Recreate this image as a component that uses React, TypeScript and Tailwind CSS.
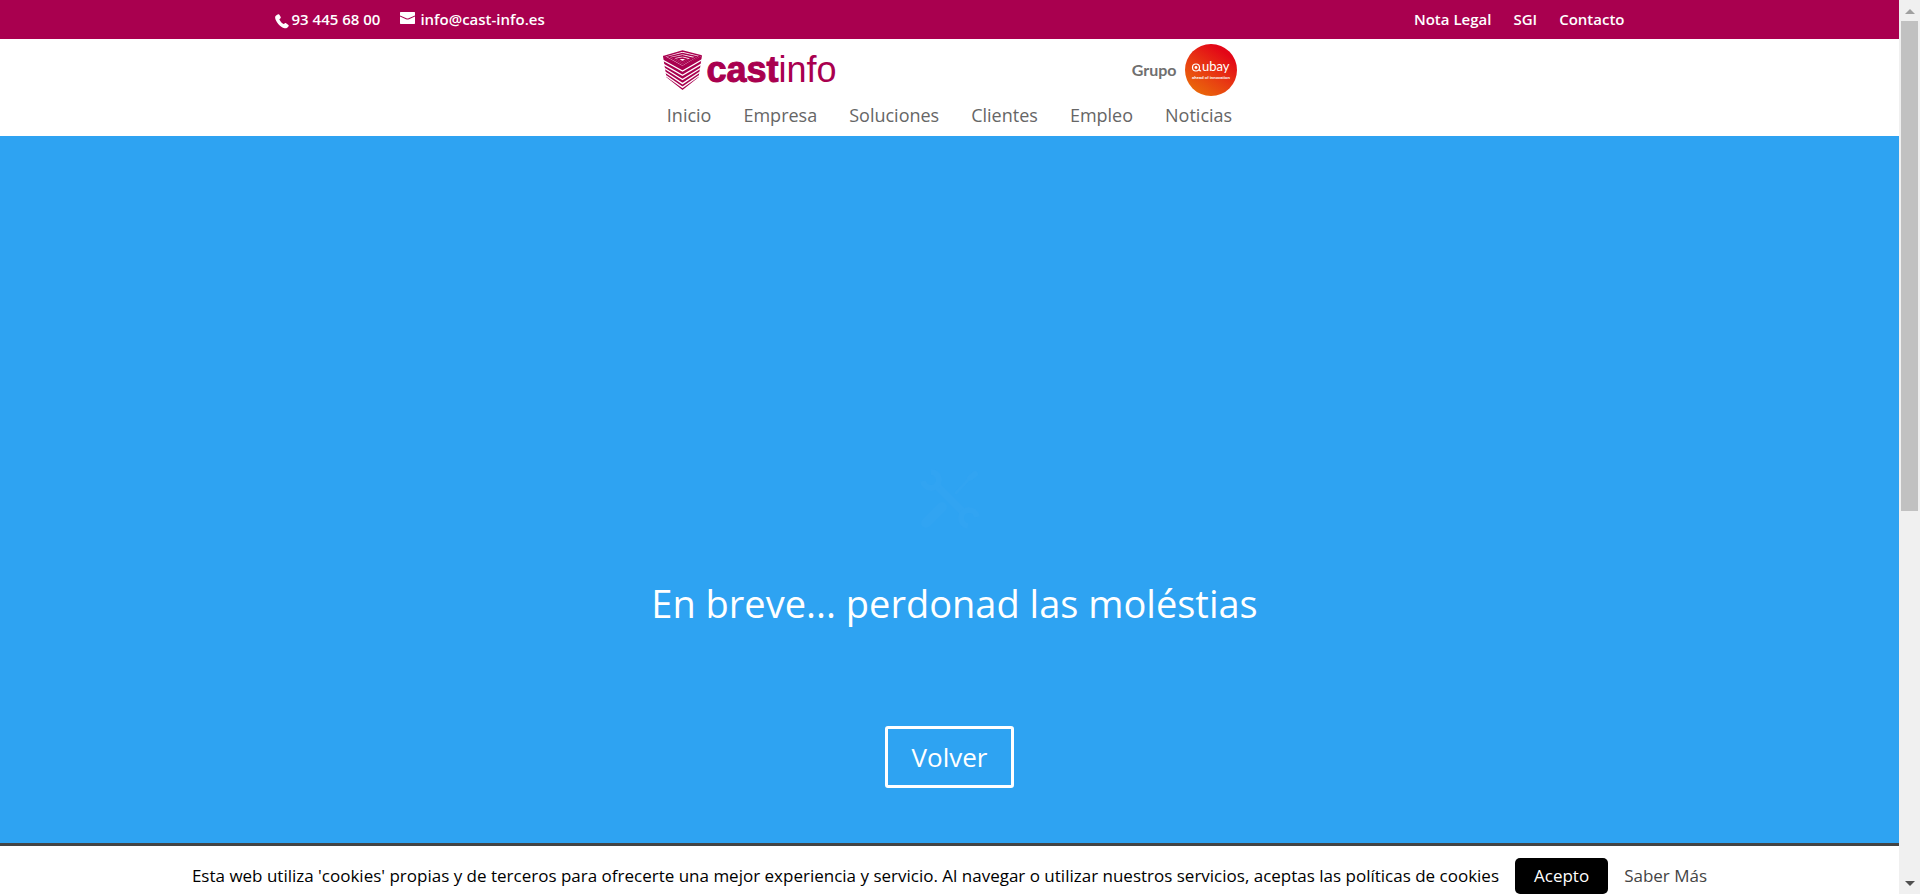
import React from "react";

const navItems = ["Inicio", "Empresa", "Soluciones", "Clientes", "Empleo", "Noticias"];
const topLinks = ["Nota Legal", "SGI", "Contacto"];

function PhoneIcon() {
  return (
    <svg aria-hidden="true" viewBox="0 0 14 15" className="mt-1 h-[15px] w-[14px] fill-current">
      <path d="M3.300.3c.5-.2.8 0 1.100.4l1.300 2.400c.2.500.1.800-.2 1.100l-1.100 1c-.1.900 3 4.600 4.200 4.800l1.400-.8c.4-.2.7-.2 1.100.1l2.300 1.800c.4.300.5.700.2 1.100-.8 1.400-2.300 2.300-4 2C5.300 13.400.2 7.500.1 3.300.1 1.800 1.800.8 3.300.3Z" />
    </svg>
  );
}

function MailIcon() {
  return (
    <svg aria-hidden="true" viewBox="0 0 15 12" className="-mt-1 h-3 w-[15px] fill-current">
      <path d="M.5 0h14l.5.500v3L8.600 6.200c-.7.300-1.500.3-2.200 0L0 3.500v-3Z" />
      <path d="M0 4.500 6 7.200c1 .4 2 .4 3 0l6-2.700v7l-.5.500H.5l-.5-.5Z" />
    </svg>
  );
}

function CubeMark() {
  return (
    <svg aria-hidden="true" viewBox="0 0 40 41" className="h-10 w-[39px] text-[#a9004f]">
      <path className="fill-current" d="M0 6.500 20 17v24L3.500 28Z M40 5.500 20 17v24l16.500-13Z" />
      <g fill="none" stroke="#fff" strokeWidth="1.300">
        <path d="M0 10.500 20 21.500 40 10" />
        <path d="M0 14.500 20 26 39.500 14.500" />
        <path d="M1 18.500 20 30.300 39 18.500" />
        <path d="M2 22.500 20 34.500 38 22.500" />
        <path d="M3 26.500 20 38.300 37 26.500" />
      </g>
      <g fill="#fff" stroke="currentColor" strokeWidth="1.500" strokeLinejoin="miter">
        <path d="M1 6.500 20 1l18.500 4.700L20 17Z" />
        <path d="M5.500 7 20 3.600l14 3.200L20 15Z" />
        <path d="m10 8 10-2 9.500 2.200L20 13.500Z" />
        <path d="m15 9.300 5-1.100 4.500 1.300-4.500 2.500Z" />
      </g>
    </svg>
  );
}

function AubayLogo() {
  return (
    <svg role="img" aria-label="aubay" viewBox="0 0 52 52" className="size-[52px]">
      <defs>
        <linearGradient id="aubay-fill" x1="0.2" y1="0.95" x2="0.75" y2="0.15">
          <stop offset="0" stopColor="#ea6a0a" />
          <stop offset="0.5" stopColor="#e83a12" />
          <stop offset="1" stopColor="#e30617" />
        </linearGradient>
      </defs>
      <circle cx="26" cy="26" r="26" fill="url(#aubay-fill)" />
      <circle cx="11" cy="23.500" r="3.500" fill="none" stroke="#fff" strokeWidth="1.200" />
      <circle cx="11" cy="23.500" r="1.400" fill="#fff" />
      <path d="M14.200 25.500c.3 1 1 1.500 2 1.500" fill="none" stroke="#fff" strokeWidth="1.200" />
      <text x="17" y="27" fill="#fff" className="font-['Lato',sans-serif] text-[13px] font-normal">ubay</text>
      <text x="26" y="35" fill="#fff" textAnchor="middle" className="font-['Liberation_Sans',sans-serif] text-[4px] font-bold">ahead of innovation</text>
    </svg>
  );
}

function ToolsIcon() {
  return (
    <svg aria-hidden="true" viewBox="0 0 60 60" className="size-[60px] text-[#31a4f2]">
      <g fill="none" stroke="currentColor" strokeLinecap="round">
        <path strokeWidth="10" d="M6 54 22 38" />
        <path strokeWidth="3" d="M36 24 48 11" />
        <path strokeWidth="6" d="M50 9 55 5" />
        <path strokeWidth="8" d="M18 18 42 42" />
        <path strokeWidth="6" strokeLinecap="butt" d="M11 3a8 8 0 1 1-8 9M57 48a8 8 0 1 0-9 9" />
      </g>
    </svg>
  );
}

function ScrollTrack() {
  return (
    <div aria-hidden="true" className="flex w-[21px] shrink-0 flex-col items-center bg-[#f0f0f0] py-2">
      <svg viewBox="0 0 10 5" className="mt-px h-[5px] w-[10px] fill-[#a0a0a0]"><path d="M5 0 10 5H0Z" /></svg>
      <div className="mt-[7px] flex w-[17px] flex-1 flex-col">
        <div className="h-[57%] bg-[#c1c1c1]" />
      </div>
      <svg viewBox="0 0 10 5" className="h-[5px] w-[10px] fill-[#505050]"><path d="M0 0h10L5 5Z" /></svg>
    </div>
  );
}

export default function App() {
  return (
    <div className="flex h-screen bg-white font-['Open_Sans','Noto_Sans',sans-serif]">
      <div className="flex min-w-0 flex-1 flex-col">
        <div className="bg-[#a9004f] text-[15px] leading-[39px] font-semibold text-white">
          <div className="mx-auto flex max-w-[1350px] justify-between">
            <div className="flex gap-5">
              <span className="flex items-center gap-[3px]"><PhoneIcon />93 445 68 00</span>
              <a href="mailto:info@cast-info.es" className="flex items-center gap-[5px]"><MailIcon />info@cast-info.es</a>
            </div>
            <nav aria-label="Enlaces" className="flex gap-[22px]">
              {topLinks.map((t) => <a key={t} href="#">{t}</a>)}
            </nav>
          </div>
        </div>

        <header className="flex flex-col items-center pt-[5px] pb-[6px]">
          <div className="flex w-full max-w-[574px] items-center justify-between">
            <a href="#" className="flex items-center gap-[5px] font-['Liberation_Sans',sans-serif] text-[36px] leading-[52px] text-[#a9004f]">
              <CubeMark />
              <span><b className="[-webkit-text-stroke:1px_#a9004f]">cast</b>info</span>
            </a>
            <a href="#" className="flex items-center gap-2 font-['Lato',sans-serif] text-[16px] font-bold text-[#706f6f]">
              Grupo
              <AubayLogo />
            </a>
          </div>
          <nav aria-label="Principal" className="mt-1 flex gap-8 text-[18px] leading-[30px] font-medium text-[#666]">
            {navItems.map((t) => <a key={t} href="#">{t}</a>)}
          </nav>
        </header>

        <main className="flex flex-1 flex-col items-center justify-end bg-[#2ea3f2] pb-[55px] text-white">
          <ToolsIcon />
          <h1 className="mt-[44px] pl-[10px] text-[38px] leading-[60px]">En breve... perdonad las moléstias</h1>
          <a href="#" className="mt-[93px] rounded-[3px] border-[3px] border-white px-6 py-2 text-[26px] leading-10 font-medium">Volver</a>
        </main>

        <footer className="flex items-center justify-center gap-4 border-t-[3px] border-[#444] pt-3 text-[17px] leading-9 text-black">
          <p>Esta web utiliza 'cookies' propias y de terceros para ofrecerte una mejor experiencia y servicio. Al navegar o utilizar nuestros servicios, aceptas las políticas de cookies</p>
          <button type="button" className="rounded-[5px] bg-black px-[19px] text-white">Acepto</button>
          <a href="#" className="text-[#444]">Saber Más</a>
        </footer>
      </div>
      <ScrollTrack />
    </div>
  );
}
